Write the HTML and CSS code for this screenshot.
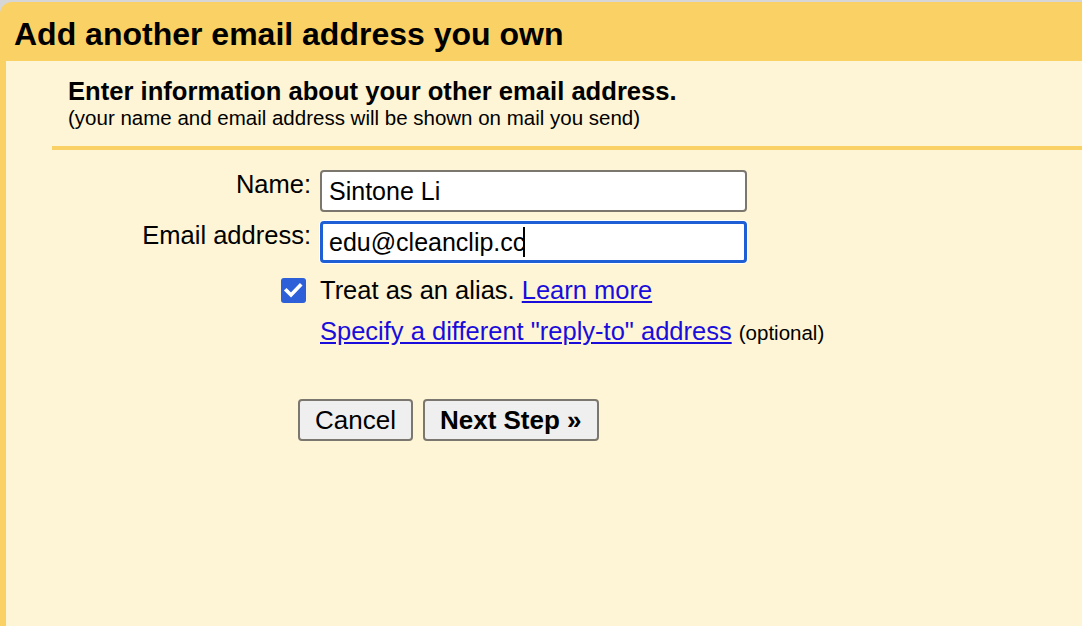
FILE: index.html
```html
<!DOCTYPE html>
<html lang="en">
<head>
<meta charset="utf-8">
<title>Add another email address you own</title>
<link rel="stylesheet" href="styles.css">
</head>
<body>
<div class="panel">
  <h1 class="title">Add another email address you own</h1>
  <div class="content">
    <div class="intro">
      <h2 class="heading">Enter information about your other email address.</h2>
      <p class="sub">(your name and email address will be shown on mail you send)</p>
    </div>
    <div class="sep"></div>
    <div class="row">
      <div class="label">Name:</div>
      <div class="field">Sintone Li</div>
    </div>
    <div class="row row-email">
      <div class="label">Email address:</div>
      <div class="field field-focus">edu@cleanclip.cc<span class="caret"></span></div>
    </div>
    <div class="row row-alias">
      <div class="check">
        <svg width="25" height="25" viewBox="0 0 25 25"><path d="M5.5 12.5 L10 17 L19 7.5" fill="none" stroke="#fff" stroke-width="3.6" stroke-linecap="square" stroke-linejoin="miter"/></svg>
      </div>
      <div class="text">Treat as an alias. <a href="#" class="link">Learn more</a></div>
    </div>
    <div class="row row-reply">
      <div></div>
      <div class="text"><a href="#" class="link">Specify a different "reply-to" address</a> <span class="optional">(optional)</span></div>
    </div>
    <div class="buttons">
      <button class="btn">Cancel</button>
      <button class="btn btn-bold">Next Step »</button>
    </div>
  </div>
</div>
</body>
</html>
```

FILE: styles.css
```css
html, body {
  margin: 0;
  padding: 0;
  height: 100%;
}
body {
  background: #d6d6d6;
  font-family: "Liberation Sans", Arial, sans-serif;
  color: #000;
  overflow: hidden;
}
.panel {
  margin-top: 2px;
  background: #fad164;
  border-top-left-radius: 12px;
  min-height: 624px;
  display: flex;
  flex-direction: column;
}
.title {
  margin: 0;
  height: 59px;
  box-sizing: border-box;
  padding: 6px 0 0 14px;
  font-size: 32px;
  line-height: 53px;
  font-weight: bold;
  white-space: nowrap;
}
.content {
  flex: 1;
  margin-left: 6px;
  background: #fdf5d6;
}
.intro {
  padding: 16px 0 0 62px;
}
.heading {
  margin: 0;
  font-size: 25.6px;
  line-height: 28px;
  font-weight: bold;
}
.sub {
  margin: 0;
  font-size: 20.5px;
  line-height: 25px;
}
.sep {
  margin: 16px 0 0 46px;
  height: 4px;
  background: #fad164;
}
.row {
  display: grid;
  grid-template-columns: 305px 1fr;
  column-gap: 9px;
  margin-top: 20px;
  align-items: start;
}
.row-email {
  margin-top: 9px;
}
.row-alias {
  margin-top: 13px;
}
.row-reply {
  margin-top: 12px;
}
.label {
  text-align: right;
  font-size: 25.5px;
  line-height: normal;
}
.field {
  width: 427px;
  height: 42px;
  box-sizing: border-box;
  border: 2px solid #7b776f;
  border-radius: 4px;
  background: #fff;
  padding-left: 7px;
  font-size: 25px;
  line-height: 38px;
  white-space: nowrap;
}
.field-focus {
  border: 3px solid #1f5fd6;
  padding-left: 6px;
  line-height: 36px;
  box-shadow: 0 0 0 1px #fff;
}
.caret {
  display: inline-block;
  width: 2px;
  height: 30px;
  background: #000;
  vertical-align: -6px;
  margin-left: -2px;
}
.check {
  justify-self: end;
  margin: 2px 5px 0 0;
  width: 25px;
  height: 25px;
  background: #2c5fd8;
  border-radius: 3px;
}
.check svg {
  display: block;
}
.text {
  font-size: 25.5px;
  line-height: normal;
  white-space: nowrap;
}
.link {
  color: #1a0ddc;
  text-decoration: underline;
}
.optional {
  font-size: 20.5px;
}
.buttons {
  display: flex;
  gap: 10px;
  margin: 53px 0 0 292px;
}
.btn {
  height: 42px;
  box-sizing: border-box;
  padding: 0 15px;
  border: 2px solid #7b776f;
  border-radius: 4px;
  background: #efefef;
  font-family: "Liberation Sans", Arial, sans-serif;
  font-size: 26px;
  color: #000;
}
.btn-bold {
  font-weight: bold;
}
```
